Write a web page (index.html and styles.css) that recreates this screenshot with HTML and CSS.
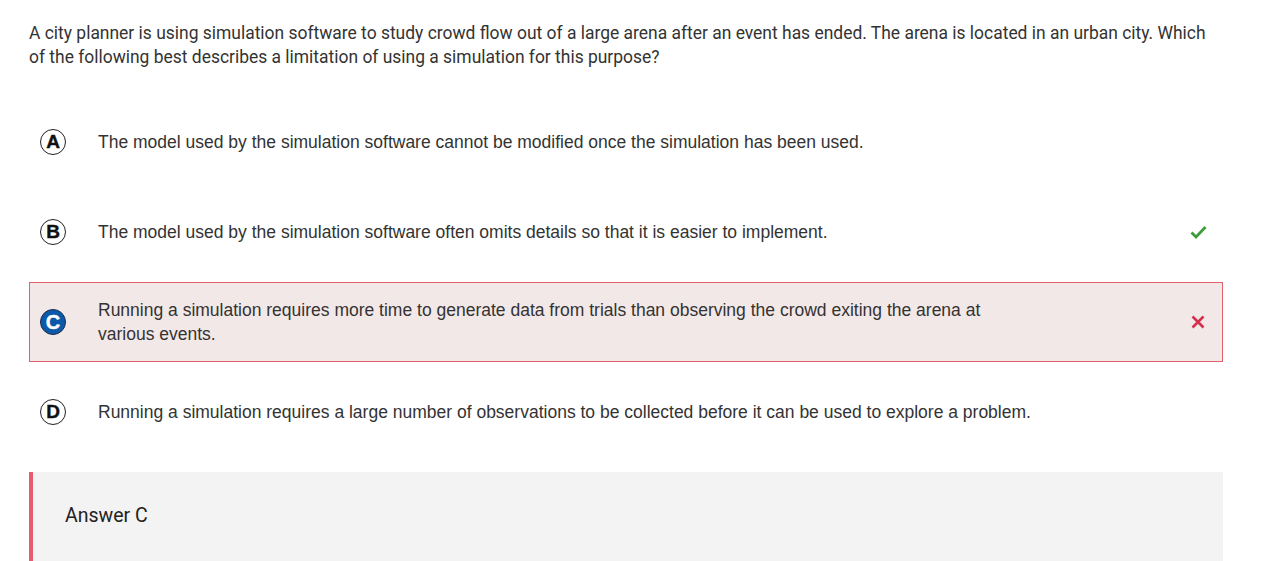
FILE: index.html
```html
<!DOCTYPE html>
<html lang="en">
<head>
<meta charset="utf-8">
<link rel="stylesheet" href="styles.css">
</head>
<body>
<div class="page">
  <p class="question">A city planner is using simulation software to study crowd flow out of a large arena after an event has ended. The arena is located in an urban city. Which of the following best describes a limitation of using a simulation for this purpose?</p>
  <div class="options">
    <div class="option">
      <span class="letter">A</span>
      <span class="text">The model used by the simulation software cannot be modified once the simulation has been used.</span>
      <span class="mark"></span>
    </div>
    <div class="option">
      <span class="letter">B</span>
      <span class="text">The model used by the simulation software often omits details so that it is easier to implement.</span>
      <span class="mark"><svg width="17" height="14" viewBox="0 0 17 14"><path d="M1.5 7.5 L6 12 L15.5 2" fill="none" stroke="#3f9b3b" stroke-width="2.8"/></svg></span>
    </div>
    <div class="option wrong">
      <span class="letter selected">C</span>
      <span class="text">Running a simulation requires more time to generate data from trials than observing the crowd exiting the arena at various events.</span>
      <span class="mark"><svg width="14" height="14" viewBox="0 0 14 14"><path d="M1.5 1.5 L12.5 12.5 M12.5 1.5 L1.5 12.5" fill="none" stroke="#d4304b" stroke-width="2.6"/></svg></span>
    </div>
    <div class="option">
      <span class="letter">D</span>
      <span class="text">Running a simulation requires a large number of observations to be collected before it can be used to explore a problem.</span>
      <span class="mark"></span>
    </div>
  </div>
  <div class="answer">Answer C</div>
</div>
</body>
</html>
```

FILE: styles.css
```css
* { box-sizing: border-box; }
html, body { margin: 0; padding: 0; background: #fff; }
.page {
  padding: 21px 44px 0 29px;
  color: #333;
}
.question {
  margin: 0;
  font-family: Roboto, "Liberation Sans", sans-serif;
  font-size: 17.45px;
  line-height: 24px;
  color: #333;
  max-width: 1194px;
}
.options {
  margin-top: 33px;
  display: flex;
  flex-direction: column;
  gap: 10px;
}
.option {
  min-height: 80px;
  display: flex;
  align-items: center;
  border: 1px solid transparent;
  padding: 15px 14px 15px 10px;
  font-family: "Liberation Sans", Arial, sans-serif;
  font-size: 17.5px;
  line-height: 24px;
  color: #333;
}
.option.wrong {
  background: #f3e8e8;
  border-color: #e0606e;
}
.letter {
  flex: none;
  width: 26px;
  height: 26px;
  border: 1.5px solid #222;
  border-radius: 50%;
  display: flex;
  align-items: center;
  justify-content: center;
  font-family: "Liberation Sans", Arial, sans-serif;
  font-weight: bold;
  font-size: 19px;
  color: #111;
  -webkit-text-stroke: 0.4px currentColor;
  margin-right: 32px;
}
.letter.selected {
  background: #0b59a8;
  color: #fff;
  border-color: #1a2b4a;
  font-size: 20px;
}
.text {
  flex: 1;
  max-width: 940px;
}
.mark {
  margin-left: auto;
  width: 20px;
  display: flex;
  justify-content: center;
}
.answer {
  margin-top: 20px;
  background: #f3f3f3;
  border-left: 4px solid #e65b6d;
  padding: 32px 32px 30px;
  font-family: Roboto, "Liberation Sans", sans-serif;
  font-size: 19.5px;
  line-height: 24px;
  color: #222;
  height: 100px;
}
```
